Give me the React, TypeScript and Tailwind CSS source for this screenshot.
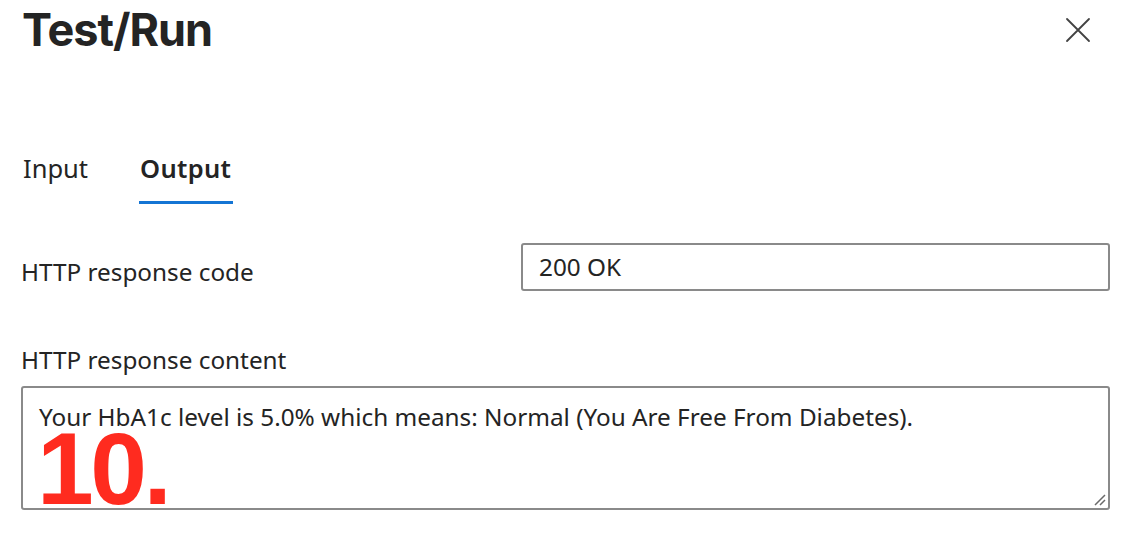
import React from "react";

export default function App() {
  const body = { fontFamily: '"Noto Sans", "Open Sans", sans-serif' };
  return (
    <div className="w-[1122px] h-[536px] bg-white overflow-hidden relative" style={body}>
      <div className="flex items-start justify-between pl-[22px] pr-[30px] pt-[2px]">
        <h1
          className="text-[45px] leading-[56px] font-bold text-[#242424] tracking-[-1px]"
          style={{ fontFamily: 'Inter, Roboto, sans-serif' }}
        >
          Test/Run
        </h1>
        <button className="mt-[14px] w-[28px] h-[28px] flex items-center justify-center">
          <svg width="26" height="26" viewBox="0 0 26 26">
            <path d="M2 2 L24 24 M24 2 L2 24" stroke="#424242" strokeWidth="1.8" strokeLinecap="round" />
          </svg>
        </button>
      </div>

      <div className="flex gap-[50px] pl-[23px] mt-[88px]">
        <div className="text-[25.5px] leading-[32px] text-[#242424] pt-[6px]">Input</div>
        <div className="flex flex-col items-center">
          <div className="text-[25.5px] leading-[32px] font-semibold text-[#242424] pt-[6px] px-[2px] tracking-[0.3px]">Output</div>
          <div className="mt-[17px] h-[3px] w-[94px] bg-[#1475d4]" />
        </div>
      </div>

      <div className="flex items-center pl-[21px] pr-[12px] mt-[39px]">
        <div className="w-[500px] text-[24.3px] text-[#242424] pt-[10px]">HTTP response code</div>
        <div className="flex-1 h-[48px] border-2 border-[#8a8a8a] rounded-[3px] flex items-center pl-[16px] text-[24.3px] text-[#242424]">
          200 OK
        </div>
      </div>

      <div className="pl-[21px] mt-[54px] text-[24.3px] leading-[30px] text-[#242424]">HTTP response content</div>

      <div className="ml-[21px] mr-[12px] mt-[11px] h-[124px] border-2 border-[#8a8a8a] rounded-[3px] relative pl-[16px] pt-[14px]">
        <div className="text-[24.3px] leading-[30px] text-[#242424]">
          Your HbA1c level is 5.0% which means: Normal (You Are Free From Diabetes).
        </div>
        <svg className="absolute right-[2px] bottom-[2px]" width="14" height="14" viewBox="0 0 14 14">
          <path d="M3 13 L13 3 M8 13 L13 8" stroke="#6a6a6a" strokeWidth="1.5" />
        </svg>
        <div
          className="absolute left-[14px] top-[30px] text-[102px] leading-none font-bold text-[#ff2b1f] tracking-[-3.5px]"
          style={{ fontFamily: '"Liberation Sans", Arial, sans-serif' }}
        >
          10.
        </div>
      </div>
    </div>
  );
}
